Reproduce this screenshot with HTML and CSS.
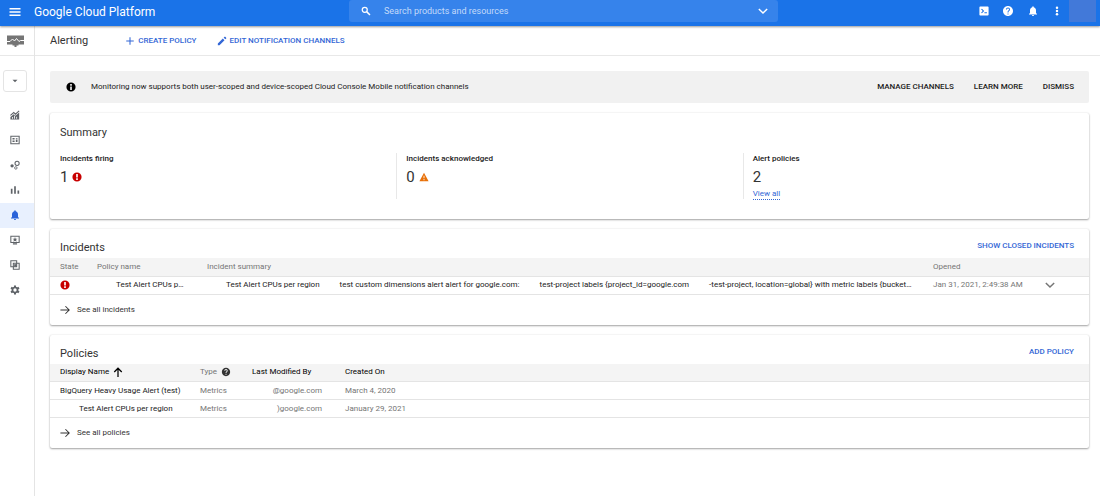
FILE: index.html
```html
<!DOCTYPE html>
<html lang="en">
<head>
<meta charset="utf-8">
<title>Alerting – Google Cloud Platform</title>
<meta name="viewport" content="width=device-width, initial-scale=1">
<link rel="stylesheet" href="styles.css">
</head>
<body>
<svg class="sprite" aria-hidden="true">
  <symbol id="bell" viewBox="0 0 24 24"><path d="M12 22c1.100 0 2-.9 2-2h-4c0 1.100.9 2 2 2zm6-6v-5c0-3.070-1.640-5.640-4.500-6.320V4c0-.83-.67-1.500-1.500-1.500s-1.500.67-1.500 1.500v.68C7.630 5.360 6 7.920 6 11v5l-2 2v1h16v-1l-2-2z"/></symbol>
  <symbol id="help" viewBox="0 0 24 24"><path d="M12 2C6.480 2 2 6.480 2 12s4.480 10 10 10 10-4.480 10-10S17.520 2 12 2zm1 17h-2v-2h2v2zm2.070-7.750l-.9.92C13.450 12.900 13 13.500 13 15h-2v-.5c0-1.100.45-2.100 1.170-2.830l1.240-1.260c.37-.36.59-.86.59-1.410 0-1.100-.9-2-2-2s-2 .9-2 2H8c0-2.210 1.790-4 4-4s4 1.790 4 4c0 .88-.36 1.680-.93 2.250z"/></symbol>
  <symbol id="error" viewBox="0 0 24 24"><path fill-rule="evenodd" d="M12 1a11 11 0 1 0 0 22 11 11 0 0 0 0-22zM10 5h4v8h-4zM10 15h4v4h-4z"/></symbol>
  <symbol id="chevron" viewBox="0 0 24 24"><path d="M2 7l10 10L22 7" fill="none" stroke="currentColor" stroke-width="3.500"/></symbol>
  <symbol id="arrow" viewBox="0 0 24 24"><path d="M1 12h21M13 3l9 9-9 9" fill="none" stroke="currentColor" stroke-width="2.500"/></symbol>
</svg>

<header class="topbar">
  <div class="topbar-start">
    <button class="icon-button" aria-label="Main menu"><svg class="icon icon-lg" viewBox="0 0 24 24"><path d="M1 4h22v3H1zM1 10.500h22v3H1zM1 17h22v3H1z"/></svg></button>
    <span class="brand">Google Cloud Platform</span>
  </div>
  <div class="search">
    <svg class="icon" viewBox="0 0 24 24"><circle cx="9" cy="9" r="6" fill="none" stroke="currentColor" stroke-width="3"/><path d="M13.500 13.500l8 8" stroke="currentColor" stroke-width="3.500"/></svg>
    <input class="search-input" type="search" placeholder="Search products and resources" aria-label="Search products and resources">
    <button class="icon-button" aria-label="Show search options"><svg class="icon"><use href="#chevron"/></svg></button>
  </div>
  <div class="topbar-end">
    <div class="tools">
      <button class="icon-button" aria-label="Cloud Shell"><svg class="icon" viewBox="0 0 24 24"><path fill-rule="evenodd" d="M3 1h18a2 2 0 0 1 2 2v18a2 2 0 0 1-2 2H3a2 2 0 0 1-2-2V3a2 2 0 0 1 2-2zM5 8l4 4-4 4 2 1.500L12.500 12 7 6.500zM13 15v2.500h6V15z"/></svg></button>
      <button class="icon-button" aria-label="Help"><svg class="icon icon-lg"><use href="#help"/></svg></button>
      <button class="icon-button" aria-label="Notifications"><svg class="icon icon-lg"><use href="#bell"/></svg></button>
      <button class="icon-button" aria-label="More options"><svg class="icon" viewBox="0 0 24 24"><circle cx="12" cy="4" r="3"/><circle cx="12" cy="12" r="3"/><circle cx="12" cy="20" r="3"/></svg></button>
    </div>
    <button class="account" aria-label="Account"></button>
  </div>
</header>

<div class="shell">
  <nav class="sidebar" aria-label="Monitoring">
    <div class="product">
      <svg class="product-icon" viewBox="0 0 34 24"><path fill="#757575" d="M0 1h34v18H0zM11 19h12v2h-4v3h-4v-3h-4z"/><path d="M0 13h6l5-5 4 4 4-5 5 6 3-2h7" fill="none" stroke="#fff" stroke-width="2"/></svg>
    </div>
    <button class="scope" aria-label="Select workspace"><svg class="icon" viewBox="0 0 24 24"><path d="M6 9h12l-6 6z"/></svg></button>
    <a class="nav-item" href="#overview" aria-label="Overview"><svg class="icon" viewBox="0 0 24 24"><path d="M1 13l8-7 4 4 9-8" fill="none" stroke="currentColor" stroke-width="2.500"/><path fill-rule="evenodd" d="M1 17l8-7 4 4 9-8v17H1zM5 17v4h2v-4zM10 14v7h2v-7zM15 16v5h2v-5z"/></svg></a>
    <a class="nav-item" href="#dashboards" aria-label="Dashboards"><svg class="icon" viewBox="0 0 24 24"><path d="M2 3h20v18H2z" fill="none" stroke="currentColor" stroke-width="2.500"/><path d="M6 7h5v4H6zM6 13h5v4H6zM14 7h4v2h-4zM14 11h4v6h-4z"/></svg></a>
    <a class="nav-item" href="#services" aria-label="Services"><svg class="icon" viewBox="0 0 24 24"><circle cx="5" cy="14" r="4"/><circle cx="17" cy="8" r="5" fill="none" stroke="currentColor" stroke-width="2.500"/><circle cx="14" cy="19" r="3" fill="none" stroke="currentColor" stroke-width="2"/></svg></a>
    <a class="nav-item" href="#metrics" aria-label="Metrics explorer"><svg class="icon" viewBox="0 0 24 24"><path d="M2 9h4v12H2zM10 3h4v18h-4zM18 13h4v8h-4z"/></svg></a>
    <a class="nav-item nav-item-active" href="#alerting" aria-label="Alerting" aria-current="page"><svg class="icon icon-lg"><use href="#bell"/></svg></a>
    <a class="nav-item" href="#uptime" aria-label="Uptime checks"><svg class="icon" viewBox="0 0 24 24"><path d="M2 3h20v15H2z" fill="none" stroke="currentColor" stroke-width="2.500"/><path d="M7 20h10v3H7zM12 5l1.500 4H18l-3.500 2.500L16 16l-4-2.500L8 16l1.500-4.500L6 9h4.500z"/></svg></a>
    <a class="nav-item" href="#groups" aria-label="Groups"><svg class="icon" viewBox="0 0 24 24"><path d="M2 2h14v14H2zM8 8h14v14H8z" fill="none" stroke="currentColor" stroke-width="2.500"/><path d="M10 10h6v6h-6z"/></svg></a>
    <a class="nav-item" href="#settings" aria-label="Settings"><svg class="icon" viewBox="0 0 24 24"><circle cx="12" cy="12" r="6" fill="none" stroke="currentColor" stroke-width="4"/><path d="M12 1v5M12 18v5M2.500 6.500l4 2.500M17.500 15l4 2.500M2.500 17.500l4-2.500M17.500 9l4-2.500" stroke="currentColor" stroke-width="5"/></svg></a>
  </nav>

  <div class="page">
    <div class="toolbar">
      <h1 class="page-title">Alerting</h1>
      <button class="action"><svg class="icon" viewBox="0 0 24 24"><path d="M12 3v18M3 12h18" stroke="currentColor" stroke-width="2.500"/></svg>CREATE POLICY</button>
      <button class="action"><svg class="icon" viewBox="0 0 24 24"><path d="M2 18v4h4L18 10l-4-4zM22 6a1.500 1.500 0 0 0 0-2l-2-2a1.500 1.500 0 0 0-2 0l-2 2 4 4z"/></svg>EDIT NOTIFICATION CHANNELS</button>
    </div>

    <main class="content">
      <section class="banner">
        <svg class="icon" viewBox="0 0 24 24"><path fill-rule="evenodd" d="M12 1a11 11 0 1 0 0 22 11 11 0 0 0 0-22zM10 5h4v4h-4zM10 11h4v8h-4z"/></svg>
        <p class="banner-text">Monitoring now supports both user-scoped and device-scoped Cloud Console Mobile notification channels</p>
        <button class="banner-button">MANAGE CHANNELS</button>
        <button class="banner-button">LEARN MORE</button>
        <button class="banner-button">DISMISS</button>
      </section>

      <section class="card">
        <h2 class="card-title summary-title">Summary</h2>
        <div class="stats">
          <div class="stat">
            <h3 class="stat-label">Incidents firing</h3>
            <div class="stat-value">1 <svg class="icon error"><use href="#error"/></svg></div>
          </div>
          <div class="stat">
            <h3 class="stat-label">Incidents acknowledged</h3>
            <div class="stat-value">0 <svg class="icon warning" viewBox="0 0 24 24"><path fill-rule="evenodd" d="M12 2L1 22h22zM11 9h2v6h-2zM11 17h2v3h-2z"/></svg></div>
          </div>
          <div class="stat">
            <h3 class="stat-label">Alert policies</h3>
            <div class="stat-value">2</div>
            <a class="view-all" href="#policies">View all</a>
          </div>
        </div>
      </section>

      <section class="card">
        <div class="card-head">
          <h2 class="card-title">Incidents</h2>
          <button class="action">SHOW CLOSED INCIDENTS</button>
        </div>
        <table class="table incidents">
          <colgroup><col class="col-state"><col class="col-policy"><col><col class="col-opened"><col class="col-expand"></colgroup>
          <thead><tr><th>State</th><th>Policy name</th><th>Incident summary</th><th>Opened</th><th></th></tr></thead>
          <tbody>
            <tr>
              <td><svg class="icon error"><use href="#error"/></svg></td>
              <td class="indent strong">Test Alert CPUs p…</td>
              <td class="indent strong"><div class="parts"><span>Test Alert CPUs per region</span><span>test custom dimensions alert alert for google.com:</span><span>test-project labels {project_id=google.com</span><span>-test-project, location=global} with metric labels {bucket…</span></div></td>
              <td>Jan 31, 2021, 2:49:38 AM</td>
              <td><button class="icon-button" aria-label="Expand incident"><svg class="icon"><use href="#chevron"/></svg></button></td>
            </tr>
          </tbody>
        </table>
        <a class="see-all" href="#incidents"><svg class="icon"><use href="#arrow"/></svg>See all incidents</a>
      </section>

      <section class="card" id="policies">
        <div class="card-head">
          <h2 class="card-title">Policies</h2>
          <button class="action">ADD POLICY</button>
        </div>
        <table class="table policies">
          <colgroup><col class="col-name"><col class="col-type"><col class="col-modified"><col></colgroup>
          <thead><tr>
            <th class="sortable"><span class="th-label">Display Name <svg class="icon" viewBox="0 0 24 24"><path d="M12 24V3M3 12l9-9 9 9" fill="none" stroke="currentColor" stroke-width="3"/></svg></span></th>
            <th><span class="th-label">Type <svg class="icon dark"><use href="#help"/></svg></span></th>
            <th class="sortable">Last Modified By</th>
            <th class="sortable">Created On</th>
          </tr></thead>
          <tbody>
            <tr><td class="strong">BigQuery Heavy Usage Alert (test)</td><td>Metrics</td><td class="email">@google.com</td><td>March 4, 2020</td></tr>
            <tr><td class="indent strong">Test Alert CPUs per region</td><td>Metrics</td><td class="email">)google.com</td><td>January 29, 2021</td></tr>
          </tbody>
        </table>
        <a class="see-all" href="#all-policies"><svg class="icon"><use href="#arrow"/></svg>See all policies</a>
      </section>
    </main>
  </div>
</div>
</body>
</html>
```

FILE: styles.css
```css
* { box-sizing: border-box; }

body {
  display: flex;
  flex-direction: column;
  min-height: 100vh;
  margin: 0;
  background: #fff;
  color: #333;
  font: 8px/12px Roboto, "Liberation Sans", sans-serif;
}

h1, h2, h3, p { margin: 0; font-weight: 400; }

button {
  padding: 0;
  border: 0;
  background: none;
  color: inherit;
  font: inherit;
  cursor: pointer;
}

.sprite { display: none; }

.icon {
  flex: none;
  display: block;
  width: 10px;
  height: 10px;
  fill: currentColor;
}

.icon-lg { width: 12px; height: 12px; }
.icon-button { display: flex; align-items: center; justify-content: center; }
.error { color: #c80000; }
.warning { color: #e8710a; }
.dark { color: #333; }

/* Top bar */
.topbar {
  position: relative;
  display: grid;
  grid-template-columns: 349fr 429fr 322fr;
  height: 26px;
  background: #1a73e8;
  color: #fff;
  box-shadow: 0 1px 2px rgba(0, 0, 0, .4);
}

.topbar-start { display: flex; align-items: center; gap: 13px; padding: 0 0 3px 9px; }
.brand { font-size: 12px; }

.search {
  display: flex;
  align-items: center;
  gap: 13px;
  height: 22px;
  padding: 0 10px 0 12px;
  border-radius: 3px;
  background: #3683eb;
}

.search-input {
  flex: 1;
  min-width: 0;
  padding: 0;
  border: 0;
  outline: 0;
  background: none;
  color: #fff;
  font: 9px/12px Roboto, "Liberation Sans", sans-serif;
}

.search-input::placeholder { color: #c3dafa; opacity: 1; }

.topbar-end {
  display: flex;
  align-items: center;
  justify-content: flex-end;
  gap: 7px;
  height: 22px;
  padding-right: 4px;
}

.tools { display: flex; align-items: center; gap: 13px; }
.account { width: 27px; height: 22px; background: #4279d9; }

/* Side navigation */
.shell { display: flex; flex: 1; }

.sidebar {
  display: flex;
  flex: none;
  flex-direction: column;
  width: 35px;
  border-right: 1px solid #e4e4e4;
  color: #5f6368;
}

.product {
  display: flex;
  align-items: center;
  height: 30px;
  padding-left: 7px;
  border-bottom: 1px solid #e8e8e8;
}

.product-icon { width: 17px; height: 12px; }

.scope {
  display: flex;
  align-items: center;
  justify-content: center;
  width: 24px;
  height: 22px;
  margin: 14px 0 11px 3px;
  border: 1px solid #e4e4e4;
  border-radius: 3px;
}

.nav-item {
  display: flex;
  align-items: center;
  justify-content: center;
  height: 25px;
  padding: 0 4px 2px 0;
  color: inherit;
}

.nav-item-active { background: #e8f0fe; color: #2962d9; }

/* Page */
.page { flex: 1; min-width: 0; }

.toolbar {
  display: flex;
  align-items: center;
  height: 30px;
  padding-left: 15px;
  border-bottom: 1px solid #e8e8e8;
}

.page-title { margin-right: 37px; font-size: 11px; }

.action {
  display: flex;
  align-items: center;
  gap: 3px;
  color: #3367d6;
  font-weight: 500;
}

.action + .action { margin-left: 20px; }

.content {
  display: flex;
  flex-direction: column;
  gap: 10px;
  padding: 15px 11px 15px 15px;
}

.banner {
  display: flex;
  align-items: center;
  gap: 20px;
  height: 32px;
  padding: 0 15px 0 16px;
  border-radius: 2px;
  background: #f1f1f1;
  color: #212121;
}

.banner .icon { color: #000; }
.banner-text { flex: 1; margin-left: -5px; }
.banner-button { font-weight: 500; }

.card {
  border-radius: 2px;
  background: #fff;
  box-shadow: 0 1px 2px rgba(0, 0, 0, .35), 0 0 2px rgba(0, 0, 0, .1);
}

.card-title { font-size: 11px; line-height: 16px; }
.summary-title { padding: 12px 10px; }

.stats { display: grid; grid-template-columns: repeat(3, 1fr); padding-bottom: 20px; }
.stat { height: 46px; padding-left: 10px; }
.stat + .stat { padding-left: 9px; border-left: 1px solid #e8e8e8; }
.stat-label { color: #212121; font-size: 8px; line-height: 12px; font-weight: 500; }

.stat-value {
  display: flex;
  align-items: center;
  gap: 4px;
  margin-top: 3px;
  font-size: 15px;
  line-height: 18px;
}

.view-all {
  display: block;
  width: fit-content;
  margin-top: 2px;
  color: #3367d6;
  line-height: 11px;
  text-decoration: none;
  border-bottom: 1px dotted #3367d6;
}

.card-head {
  display: flex;
  align-items: flex-end;
  justify-content: space-between;
  height: 29px;
  padding: 0 15px 2px 10px;
}

.card-head .action { padding-bottom: 4px; }

/* Tables */
.table { width: 100%; table-layout: fixed; border-collapse: collapse; border-bottom: 1px solid #ddd; }

.table th, .table td {
  height: 18px;
  padding: 0 0 0 10px;
  overflow: hidden;
  color: #757575;
  font-weight: 400;
  text-align: left;
  white-space: nowrap;
}

.table th { background: #f4f4f4; }
.table tr { border-bottom: 1px solid #e4e4e4; }
.table th.sortable { color: #000; }
.table td.strong { color: #212121; }
.table td.indent { padding-left: 29px; }
.table td.email { padding-right: 13px; text-align: right; }
.th-label { display: flex; align-items: center; gap: 4px; }
.parts { display: flex; gap: 20px; }

.col-state { width: 37px; }
.col-policy { width: 110px; }
.col-opened { width: 112px; }
.col-expand { width: 54px; }
.col-name { width: 140px; }
.col-type { width: 52px; }
.col-modified { width: 93px; }

.see-all {
  display: flex;
  align-items: center;
  gap: 7px;
  height: 30px;
  padding-left: 10px;
  color: #333;
  text-decoration: none;
}
```
